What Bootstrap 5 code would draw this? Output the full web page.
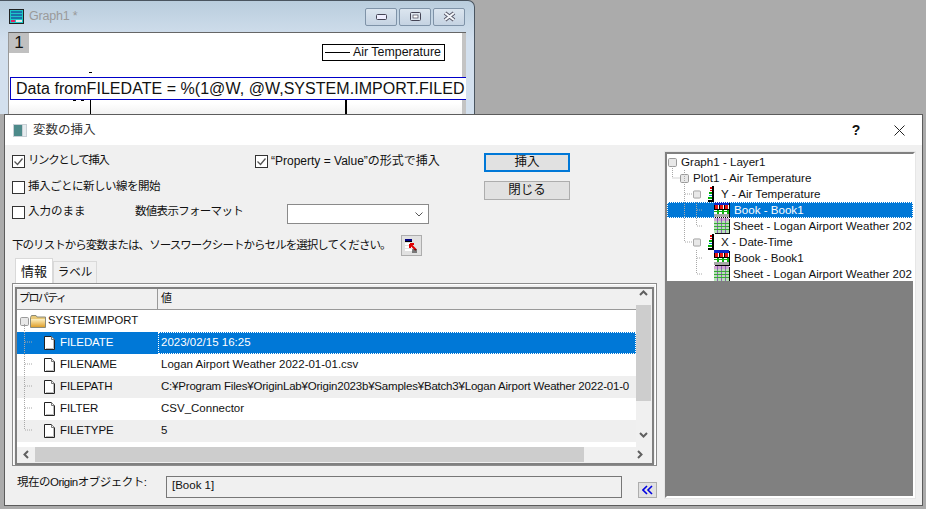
<!DOCTYPE html>
<html lang="ja">
<head>
<meta charset="utf-8">
<title>変数の挿入</title>
<link href="https://cdn.jsdelivr.net/npm/bootstrap@5.3.0/dist/css/bootstrap.min.css" rel="stylesheet">
<style>
html,body{height:100%;margin:0;overflow:hidden}
body{background:#ababab;font:12px/1 "Liberation Sans","Noto Sans CJK JP",sans-serif;color:#111;width:926px;height:509px;position:relative}
/* graph window */
.gw{position:absolute;left:0;top:0;width:475px;height:114px;background:linear-gradient(#b9cddd,#d3e0ee 40px);border:1px solid #4a5560;border-bottom:0;border-left:0;border-radius:0 7px 0 0;padding:0 9px 0 8px}
.gw-head{height:31px;padding-left:1px}
.gw-title{color:#9a9a9a;font-size:12.5px;margin-left:5px;letter-spacing:-.2px}
.gw-btn{width:32px;height:18px;border:1px solid #7f93a8;border-radius:2px;background:linear-gradient(#dbe5ef,#c5d3e2);margin-left:2px}
.gw-canvas{position:relative;height:83px;width:458px;background:linear-gradient(#fff 70px,#f1f1f1);border-top:1px solid #666;border-left:1px solid #999;box-shadow:inset -4px 0 0 #c4c4c4;overflow:hidden}
.gw-tile{width:20px;height:20px;background:#c0c0c0;font-size:17px;line-height:20px;text-align:center}
.gw-legend{position:absolute;left:313px;top:11px;width:123px;height:17px;border:1px solid #000;font-size:12.4px;padding-left:2px;background:#fff}
.gw-legend i{display:inline-block;width:25px;border-top:1px solid #000;margin-right:3px}
.gw-text{position:absolute;left:1px;top:44px;width:456px;height:23px;border:1px solid #0000c8;border-right:0;background:#fff;font-size:16px;line-height:21px;padding-left:5px;white-space:nowrap;overflow:hidden;letter-spacing:.04px}
.gw-axis{position:absolute;top:67px;height:16px;border-left:1px solid #000}
.gw-axis.a1{left:81px}.gw-axis.a2{left:336px;border-left-width:2px}
.gw-tick{position:absolute;height:1px;background:#000}
.gw-tick.t1{left:80px;top:39px;width:3px}
.gw-tick.t2{left:64px;top:67px;width:3px}
.gw-tick.t3{left:72px;top:67px;width:3px}
/* dialog */
.dlg{position:absolute;left:4px;top:114px;width:919px;height:392px;border:1px solid #5c5c5c;background:#f0f0f0}
.dlg-head{height:30px;background:#fff;padding-left:8px}
.dlg-title{font-size:12.5px;color:#333;margin-left:6px}
.dlg-help{margin-left:auto;font-weight:700;width:16px;font-size:14px;text-align:center;margin-right:30px}
.dlg-x{margin-right:17px}
.dlg-body{height:360px}
.lft{width:661px;padding:3px 0 0 7px}
.opts{width:472px}
.opt-row{height:26px}
.opt-row.last{height:24px}
.cb{width:13px;height:13px;border:1px solid #333;background:#fff;flex:none;margin-right:3px;display:flex;align-items:center;justify-content:center}
.ja-a{font-size:11.5px;letter-spacing:-1.4px}
.ja-b{font-size:11.5px;letter-spacing:-.5px}
.ja-c{font-size:11.5px}
.spot-a{width:243px}
.spot-b{width:123px}
.lbl-fmt{width:152px;font-size:11.5px;letter-spacing:-.7px}
.sel{width:142px;height:20px;background:#fff;border:1px solid #8a8a8a;display:flex;justify-content:flex-end;align-items:center;padding-right:5px;margin-top:4px}
.btn-col{padding-top:5px;gap:9px;width:86px}
.btn.wbtn{width:86px;height:19px;padding:0;border-radius:0;background:#e1e1e1;border:1px solid #adadad;font-size:12.5px;line-height:17px;color:#111}
.btn.wbtn.dft{border:2px solid #0078d7;line-height:15px}
.hint{height:21px;margin-top:11px;font-size:11.5px;letter-spacing:-.95px}
.pick{width:21px;height:21px;border:1px solid #adadad;background:#e1e1e1;margin-left:10px;display:flex;align-items:center;justify-content:center}
.tabs{height:25px;margin:2px 0 0 3px;align-items:flex-end;border:0}
.tabs .nav-link{border-radius:0;padding:0;color:#111;font-size:11.5px;height:22px;line-height:21px;border:1px solid #d9d9d9;border-bottom:0;background:#f0f0f0;width:44px;text-align:center;margin:0}
.tabs .nav-link.active{height:25px;width:38px;line-height:25px;font-size:13px;background:#fff;border-color:#d9d9d9;color:#111}
.grp{width:645px;height:183px;border:1px solid #8c8c8c;padding:3px 2px 1px 2px;box-shadow:inset 0 0 0 1px #fff}
.lst{height:178px;border:2px solid #808080;background:#f0f0f0;position:relative;display:flex;flex-direction:column;width:639px}
.lst-main{height:158px;display:flex}
.lst-rows{width:619px;background:#fff;position:relative}
.th{height:21px;background:#f0f0f0;border-bottom:1px solid #999;display:flex}
.th div{line-height:19px;padding-left:3px;font-size:11px;letter-spacing:-1.6px}
.th div:first-child{width:141px;border-right:1px solid #999;padding-left:2px}
.rw{height:22px;display:flex;align-items:center;white-space:nowrap;overflow:hidden;font-size:11.5px}
.rw.alt{background:#efefef}
.rw.on{background:#0078d7;color:#fff}
.c1{width:141px;flex:none;display:flex;align-items:center;padding-left:27px;height:100%;letter-spacing:-.1px}
.c1 svg{margin-right:5px}
.c2{padding-left:3px;height:100%;line-height:21px;flex:1}
.c2.tight{letter-spacing:-.2px}
.rw.on .c2{outline:1px dotted #fff;outline-offset:-1px}
.rw.rt{padding-left:3px;font-size:11.3px}
.gp1{margin-right:1px}.gp2{margin-right:2px}
.vsb{width:15px;position:relative;background:#f0f0f0;display:flex;flex-direction:column;align-items:center}
.vth{width:15px;height:96px;background:#cdcdcd;margin-top:8px;flex:none}
.hsb{height:15px;display:flex;align-items:center;background:#f0f0f0;width:634px}
.hth{width:549px;height:15px;background:#cdcdcd;margin-left:6px}
.arw{flex:none}
.arw-l{margin-left:6px}
.arw-wrap{width:15px;height:8px;display:flex;align-items:center;justify-content:center}
.btm{margin-top:10px;height:22px;width:645px}
.btm-lab{width:154px;padding-left:5px;padding-bottom:9px;font-size:11.5px;letter-spacing:-.5px;white-space:nowrap}
.obj{width:456px;height:22px;border:1px solid #777;padding:3px 0 0 5px;font-size:11.5px}
.more{width:19px;height:16px;border:1px solid #adadad;background:#e1e1e1;margin:6px 0 0 16px;display:flex;align-items:center;justify-content:center}
.rgt{width:250px;height:346px;margin:7px 0 0 -1px;border:2px solid #808080;border-right-color:#fff;border-bottom-color:#fff;background:#808080;outline:1px solid #e6e6e6}
.tree{height:127px;background:#fff;position:relative;overflow:hidden}
.tr{height:16px;display:flex;align-items:center;white-space:nowrap;font-size:11.6px}
.tr.on{background:#0078d7;color:#fff;outline:1px dotted #fff;outline-offset:-1px}
.tr svg{flex:none}
.tree-lines,.lst-lines{position:absolute;left:0;top:0;pointer-events:none}
.i0{padding-left:1px}.i1{padding-left:13px}.i2{padding-left:26px}.i3{padding-left:47px}
.gap3{margin-right:4px}.gap6{margin-right:6px}.gapb{margin-right:4px}.gaps{margin-right:3px}
</style>
</head>
<body>
<svg width="0" height="0" class="position-absolute">
<defs>
<linearGradient id="fg" x1="0" y1="0" x2="0" y2="1"><stop offset="0" stop-color="#fdf0c0"/><stop offset="1" stop-color="#dfa02c"/></linearGradient>
<symbol id="bx" viewBox="0 0 9 9"><rect x=".5" y=".5" width="8" height="8" rx="1.2" fill="#e8e8e8" stroke="#9a9a9a"/></symbol>
<symbol id="doc" viewBox="0 0 11 14"><path d="M.5.5H7.500L10.500 3.500V13.500H.5Z" fill="#fff" stroke="#222"/><path d="M7.500.5V3.500H10.500" fill="#eee" stroke="#777"/><path d="M9.500 4V12.500H2" fill="none" stroke="#bbb"/></symbol>
<symbol id="fld" viewBox="0 0 16 13"><path d="M.5 2.500 1.500.5H6L7 2H15.500V12.500H.5Z" fill="#e8c878" stroke="#8a8a7a"/><rect x="1" y="4" width="14" height="8" fill="url(#fg)"/></symbol>
<symbol id="yic" viewBox="0 0 8 16"><rect x="5" y="0" width="2" height="16" fill="#000"/><rect x="1" y="14" width="6" height="2" fill="#000"/><rect x="3" y="1" width="2" height="2" fill="#d00"/><rect x="3" y="4" width="2" height="1" fill="#d00"/><rect x="2" y="6" width="3" height="2" fill="#0a0"/><rect x="2" y="9" width="3" height="1" fill="#08c"/><rect x="1" y="11" width="4" height="2" fill="#0a0"/></symbol>
<symbol id="bok" viewBox="0 0 16 16"><rect width="15" height="15" fill="#fff"/><rect width="15" height="3" fill="#0a28c8"/><path d="M1 3h3v4H1zM6 3h3v4H6zM11 3h3v4h-3z" fill="#e81818"/><path d="M0 3h1v5H0zM5 3h1v5H5zM10 3h1v5h-1z" fill="#000"/><rect y="7" width="15" height="1" fill="#000"/><path d="M0 9h15v1H0zM3 8h2v4H3zM8 8h2v4H8zM13 8h2v4h-2z" fill="#10b010"/><rect y="12" width="15" height="3" fill="#a8a8a8"/><path d="M15 1h1v15H1v-1h14z" fill="#000"/></symbol>
<symbol id="sht" viewBox="0 0 16 16"><rect width="15" height="15" fill="#b6e2b6"/><rect width="15" height="3" fill="#d0a8d0"/><path d="M3 0h1v15H3zM7 0h1v15H7zM11 0h1v15h-1z" fill="#9060b8"/><path d="M0 5h15v1H0zM0 8h15v1H0zM0 11h15v1H0z" fill="#38a838"/><path d="M15 1h1v15H1v-1h14z" fill="#111"/></symbol>
<symbol id="up" viewBox="0 0 9 6"><path d="M1 5 4.500 1.500 8 5" fill="none" stroke="#606060" stroke-width="2"/></symbol>
<symbol id="dn" viewBox="0 0 9 6"><path d="M1 1 4.500 4.500 8 1" fill="none" stroke="#606060" stroke-width="2"/></symbol>
<symbol id="lf" viewBox="0 0 6 9"><path d="M5 1 1.500 4.500 5 8" fill="none" stroke="#606060" stroke-width="2"/></symbol>
<symbol id="rg" viewBox="0 0 6 9"><path d="M1 1 4.500 4.500 1 8" fill="none" stroke="#606060" stroke-width="2"/></symbol>
<symbol id="tick" viewBox="0 0 11 11"><path d="M1.500 5.500 4.500 8.500 9.500 2.500" fill="none" stroke="#555" stroke-width="1.300"/></symbol>
</defs>
</svg>

<section class="gw">
  <div class="gw-head d-flex align-items-center">
    <svg width="15" height="15" viewBox="0 0 15 15"><rect x=".5" y=".5" width="14" height="14" fill="#1cc7c7" stroke="#222"/><path d="M2 3h11M2 6h11M2 9h11" stroke="#1a1a8c"/><rect x="2" y="11" width="4" height="2" fill="#e02060"/><rect x="7" y="11" width="6" height="2" fill="#e8e8e8"/></svg>
    <span class="gw-title">Graph1 *</span>
    <div class="ms-auto d-flex">
      <div class="gw-btn d-flex align-items-center justify-content-center"><svg width="11" height="7" viewBox="0 0 11 7"><rect x=".5" y="1.500" width="10" height="5" rx="1" fill="#eef" stroke="#445"/></svg></div>
      <div class="gw-btn d-flex align-items-center justify-content-center"><svg width="11" height="9" viewBox="0 0 11 9"><rect x=".5" y=".5" width="10" height="8" rx="1" fill="#dfe7f0" stroke="#445"/><rect x="3" y="3" width="5" height="3" fill="#fff" stroke="#445" stroke-width=".7"/></svg></div>
      <div class="gw-btn d-flex align-items-center justify-content-center"><svg width="15" height="11" viewBox="0 0 15 11"><path d="M3 2 12 9M12 2 3 9" stroke="#556" stroke-width="4"/><path d="M3 2 12 9M12 2 3 9" stroke="#f2f5f9" stroke-width="2.200"/></svg></div>
    </div>
  </div>
  <div class="gw-canvas">
    <div class="gw-tile">1</div>
    <div class="gw-legend d-flex align-items-center"><i></i>Air Temperature</div>
    <div class="gw-tick t1"></div><div class="gw-tick t2"></div><div class="gw-tick t3"></div>
    <div class="gw-text">Data fromFILEDATE = %(1@W, @W,SYSTEM.IMPORT.FILED</div>
    <div class="gw-axis a1"></div><div class="gw-axis a2"></div>
  </div>
</section>

<section class="dlg">
  <div class="dlg-head d-flex align-items-center">
    <svg width="14" height="13" viewBox="0 0 14 13"><rect width="14" height="13" fill="#c9d0d6"/><rect x="1" y="1" width="8" height="11" fill="#4d8a8a"/><rect x="10" y="1" width="3" height="11" fill="#e6ecef"/></svg>
    <span class="dlg-title">変数の挿入</span>
    <span class="dlg-help">?</span>
    <svg class="dlg-x" width="11" height="11" viewBox="0 0 11 11"><path d="M.5.5 10.500 10.500M10.500.5.5 10.500" stroke="#222" stroke-width="1"/></svg>
  </div>
  <div class="dlg-body d-flex">
    <div class="lft">
      <div class="d-flex">
        <div class="opts">
          <div class="opt-row d-flex align-items-center">
            <div class="spot-a d-flex align-items-center"><span class="cb"><svg width="11" height="11"><use href="#tick"/></svg></span><span class="ja-a">リンクとして挿入</span></div>
            <span class="cb"><svg width="11" height="11"><use href="#tick"/></svg></span>“Property = Value”の形式で挿入
          </div>
          <div class="opt-row d-flex align-items-center"><span class="cb"></span><span class="ja-b">挿入ごとに新しい線を開始</span></div>
          <div class="opt-row last d-flex align-items-center">
            <div class="spot-b d-flex align-items-center"><span class="cb"></span><span class="ja-c">入力のまま</span></div>
            <div class="lbl-fmt">数値表示フォーマット</div>
            <div class="sel"><svg width="8" height="5" viewBox="0 0 8 5"><path d="M.5.5 4 4 7.500.5" fill="none" stroke="#555"/></svg></div>
          </div>
        </div>
        <div class="btn-col d-flex flex-column">
          <button type="button" class="btn wbtn dft">挿入</button>
          <button type="button" class="btn wbtn">閉じる</button>
        </div>
      </div>
      <div class="hint d-flex align-items-center">下のリストから変数または、ソースワークシートからセルを選択してください。
        <div class="pick"><svg width="14" height="15" viewBox="0 0 14 15"><rect x="1" y="1" width="7" height="2" fill="#00007f"/><rect x="1" y="3" width="7" height="1" fill="#000"/><path d="M1 6h8M1 9h8M1 12h8" stroke="#fff" stroke-width="2"/><path d="M6 6 12 12M6 6v4M6 6h4" stroke="#e00000" stroke-width="2" fill="none"/><path d="M8 12h5M8 14h5" stroke="#111"/></svg></div>
      </div>
      <ul class="nav nav-tabs tabs">
        <li class="nav-item"><a class="nav-link active" href="#">情報</a></li>
        <li class="nav-item"><a class="nav-link" href="#">ラベル</a></li>
      </ul>
      <div class="grp">
        <div class="lst">
          <div class="lst-main">
            <div class="lst-rows">
              <div class="th"><div>プロパティ</div><div>値</div></div>
              <div class="rw rt"><svg class="gp1" width="9" height="9"><use href="#bx"/></svg><svg class="gp2" width="16" height="13"><use href="#fld"/></svg>SYSTEMIMPORT</div>
              <div class="rw on"><div class="c1"><svg width="11" height="14"><use href="#doc"/></svg>FILEDATE</div><div class="c2">2023/02/15 16:25</div></div>
              <div class="rw"><div class="c1"><svg width="11" height="14"><use href="#doc"/></svg>FILENAME</div><div class="c2">Logan Airport Weather 2022-01-01.csv</div></div>
              <div class="rw alt"><div class="c1"><svg width="11" height="14"><use href="#doc"/></svg>FILEPATH</div><div class="c2 tight">C:¥Program Files¥OriginLab¥Origin2023b¥Samples¥Batch3¥Logan Airport Weather 2022-01-0</div></div>
              <div class="rw"><div class="c1"><svg width="11" height="14"><use href="#doc"/></svg>FILTER</div><div class="c2">CSV_Connector</div></div>
              <div class="rw alt"><div class="c1"><svg width="11" height="14"><use href="#doc"/></svg>FILETYPE</div><div class="c2">5</div></div>
              <svg class="lst-lines" width="40" height="158"><path d="M7.500 35V140M8 53H15M8 75H15M8 97H15M8 119H15M8 141H15" stroke="#a8a8a8" stroke-dasharray="1 1" fill="none"/></svg>
            </div>
            <div class="vsb">
              <div class="arw-wrap"><svg width="9" height="6"><use href="#up"/></svg></div>
              <div class="vth"></div>
              <div class="arw-wrap mt-auto mb-2"><svg width="9" height="6"><use href="#dn"/></svg></div>
            </div>
          </div>
          <div class="hsb">
            <svg class="arw arw-l" width="6" height="9"><use href="#lf"/></svg>
            <div class="hth"></div>
            <svg class="arw ms-auto me-2" width="6" height="9"><use href="#rg"/></svg>
          </div>
        </div>
      </div>
      <div class="btm d-flex">
        <div class="btm-lab d-flex align-items-center">現在のOriginオブジェクト:</div>
        <div class="obj">[Book 1]</div>
        <div class="more"><svg width="11" height="10" viewBox="0 0 11 10"><path d="M5 1 1 5 5 9M10 1 6 5 10 9" fill="none" stroke="#0000e0" stroke-width="1.600"/></svg></div>
      </div>
    </div>
    <div class="rgt">
      <div class="tree">
        <div class="tr i0"><svg class="gap3" width="9" height="9"><use href="#bx"/></svg>Graph1 - Layer1</div>
        <div class="tr i1"><svg class="gap3" width="9" height="9"><use href="#bx"/></svg>Plot1 - Air Temperature</div>
        <div class="tr i2"><svg class="gap6" width="8" height="9"><use href="#bx"/></svg><svg class="gap6" width="8" height="16"><use href="#yic"/></svg>Y - Air Temperature</div>
        <div class="tr i3 on"><svg class="gapb" width="16" height="16"><use href="#bok"/></svg>Book - Book1</div>
        <div class="tr i3"><svg class="gaps" width="16" height="16"><use href="#sht"/></svg>Sheet - Logan Airport Weather 202</div>
        <div class="tr i2"><svg class="gap6" width="8" height="9"><use href="#bx"/></svg><svg class="gap6" width="8" height="16"><use href="#yic"/></svg>X - Date-Time</div>
        <div class="tr i3"><svg class="gapb" width="16" height="16"><use href="#bok"/></svg>Book - Book1</div>
        <div class="tr i3"><svg class="gaps" width="16" height="16"><use href="#sht"/></svg>Sheet - Logan Airport Weather 202</div>
        <svg class="tree-lines" width="60" height="127"><path d="M5.500 12V24H13M17.500 16V88M18 40H26M18 88H26M29.500 48V72M30 56H35M30 72H35M29.500 96V120M30 104H35M30 120H35" stroke="#a8a8a8" stroke-dasharray="1 1" fill="none"/></svg>
      </div>
    </div>
  </div>
</section>
<script src="https://cdn.jsdelivr.net/npm/bootstrap@5.3.0/dist/js/bootstrap.bundle.min.js"></script>
</body>
</html>
